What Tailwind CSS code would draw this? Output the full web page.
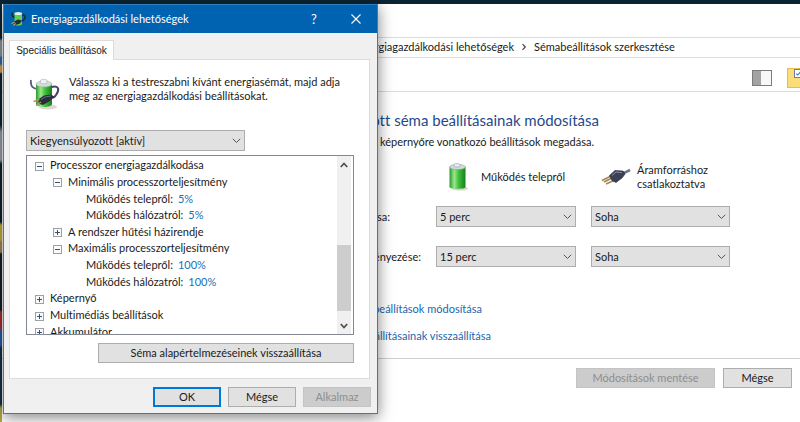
<!DOCTYPE html>
<html lang="hu">
<head>
<meta charset="utf-8">
<title>Energiagazdálkodási lehetőségek</title>
<script src="https://cdn.jsdelivr.net/npm/@tailwindcss/browser@4"></script>
</head>
<body class="relative h-screen overflow-hidden bg-[linear-gradient(to_bottom,#0b2433_0_38px,#8a9aa5_41px_55px,#2b6cb0_58px_64px,#e0a040_66px_72px,#0b2433_74px_125px,#9aa0a8_132px_160px,#0c2130_164px_222px,#c9b22e_225px_240px,#a88a50_242px_252px,#10202c_254px_310px,#b02a30_312px_326px,#1f5fae_333px_345px,#14304a_348px_404px,#b5a840_408px)] font-[Lato,'Open_Sans',sans-serif] text-[11px] leading-[14px] text-[#1a1a1a] [font-variant-ligatures:none]">

<!-- Control panel window -->
<main class="mt-[4px] ml-[2px] flex h-full flex-col bg-white">
  <nav class="mt-[33px] flex h-[21px] items-center border-y border-[#dcdcdc] pb-px" aria-label="Útvonal">
    <a href="#" class="w-[512px] text-right whitespace-nowrap">Energiagazdálkodási lehetőségek</a>
    <svg class="mx-[7px] h-[8px] w-[6px]" viewBox="0 0 6 8" fill="none" stroke="#444" stroke-width="1.2"><path d="M1.5 1.2 4.3 4 1.5 6.8"/></svg>
    <a href="#" class="whitespace-nowrap">Sémabeállítások szerkesztése</a>
  </nav>
  <div class="flex h-[34px] items-center justify-end gap-[15px] border-b border-[#dcdcdc] pt-[6px]">
    <button aria-label="Panel" class="flex h-[16px] w-[20px] border border-[#7c7c7c] bg-[#f8f8f8]"><span class="h-full w-[8px] bg-[#a3a3a3]"></span></button>
    <button aria-label="Kijelölés" class="relative h-[20px] w-[13px] overflow-hidden border border-r-0 border-[#e3bd55] bg-[#fbdc79]">
      <svg class="absolute top-0 left-[6px] h-[9px] w-[9px]" viewBox="0 0 9 9"><rect x=".5" y=".5" width="9" height="8" fill="#fff" stroke="#6d7f96"/><path d="M2.3 4.6 3.8 6 6.6 2.6" fill="none" stroke="#2a7bd0" stroke-width="1.1"/></svg>
    </button>
  </div>

  <h1 class="mt-[19px] w-[597px] text-right text-[15px] leading-[18px] whitespace-nowrap text-[#1f4a8c]">Kiegyensúlyozott séma beállításainak módosítása</h1>
  <p class="mt-[6px] w-[592px] text-right whitespace-nowrap">A képernyőre vonatkozó beállítások megadása.</p>

  <section class="mt-[13px] grid grid-cols-[419px_140px_139px] gap-x-[15px]">
    <span></span>
    <div class="flex h-[30px] items-center gap-[13px] pl-[12px]">
      <svg class="h-[30px] w-[20px]" viewBox="0 0 20 30">
        <defs><linearGradient id="cell"><stop offset="0" stop-color="#2a9a2e"/><stop offset=".3" stop-color="#9be88c"/><stop offset=".55" stop-color="#45c13f"/><stop offset="1" stop-color="#12801c"/></linearGradient></defs>
        <ellipse cx="12" cy="26.500" rx="8" ry="2" fill="#d8d3cf"/>
        <path d="M1.500 5v20c0 2.500 16 2.500 16 0V5z" fill="url(#cell)"/>
        <ellipse cx="9.500" cy="5" rx="8" ry="2.600" fill="#cfdcd6" stroke="#8aa594" stroke-width=".6"/>
        <path d="M6 4.300V2.600c0-1.300 6-1.300 6 0v1.700c0 1-6 1-6 0z" fill="#e9eef0" stroke="#8c9aa5" stroke-width=".6"/>
      </svg>
      <span class="whitespace-nowrap">Működés telepről</span>
    </div>
    <div class="flex h-[30px] items-center gap-[6px] pl-[10px]">
      <svg class="h-[20px] w-[30px] shrink-0" viewBox="0 0 30 20">
        <path d="M21 6c3 .5 5-1.500 8-3" fill="none" stroke="#70748a" stroke-width="2.600"/>
        <path d="M1 13.500 10 9M5 17l9-4M3 15l8-4" stroke="#a58355" stroke-width="1.500"/>
        <path d="M8.500 8.500 14 3.500l8 .5 2 3-3 4-6 4.500-4-2z" fill="#3c4153" stroke="#222633" stroke-width=".6"/>
        <path d="M11 8.500 15 5l6 .5" fill="none" stroke="#8b93a8"/>
      </svg>
      <span>Áramforráshoz csatlakoztatva</span>
    </div>

    <label for="display-battery" class="mt-[14px] flex h-[21px] w-[388px] items-center justify-end">A kijelző kikapcsolása:</label>
    <div class="relative mt-[14px]">
      <select id="display-battery" class="h-[21px] w-full appearance-none border border-[#adadad] bg-[#e1e1e1] px-[3px]"><option>5 perc</option></select>
      <svg class="pointer-events-none absolute top-[8px] right-[4px] h-[6px] w-[9px]" viewBox="0 0 9 6" fill="none" stroke="#555"><path d="m.8.800 3.700 3.700L8.200.800"/></svg>
    </div>
    <div class="relative mt-[14px]">
      <select aria-label="A kijelző kikapcsolása hálózatról" class="h-[21px] w-full appearance-none border border-[#adadad] bg-[#e1e1e1] px-[3px]"><option>Soha</option></select>
      <svg class="pointer-events-none absolute top-[8px] right-[4px] h-[6px] w-[9px]" viewBox="0 0 9 6" fill="none" stroke="#555"><path d="m.8.800 3.700 3.700L8.200.800"/></svg>
    </div>

    <label for="sleep-battery" class="mt-[19px] flex h-[21px] items-center justify-end">Az alvó állapot kezdeményezése:</label>
    <div class="relative mt-[19px]">
      <select id="sleep-battery" class="h-[21px] w-full appearance-none border border-[#adadad] bg-[#e1e1e1] px-[3px]"><option>15 perc</option></select>
      <svg class="pointer-events-none absolute top-[8px] right-[4px] h-[6px] w-[9px]" viewBox="0 0 9 6" fill="none" stroke="#555"><path d="m.8.800 3.700 3.700L8.200.800"/></svg>
    </div>
    <div class="relative mt-[19px]">
      <select aria-label="Az alvó állapot kezdeményezése hálózatról" class="h-[21px] w-full appearance-none border border-[#adadad] bg-[#e1e1e1] px-[3px]"><option>Soha</option></select>
      <svg class="pointer-events-none absolute top-[8px] right-[4px] h-[6px] w-[9px]" viewBox="0 0 9 6" fill="none" stroke="#555"><path d="m.8.800 3.700 3.700L8.200.800"/></svg>
    </div>
  </section>

  <a href="#" class="mt-[35px] w-[480px] text-right whitespace-nowrap text-[#1a66ad]">Speciális energiaellátási beállítások módosítása</a>
  <a href="#" class="mt-[13px] w-[489px] text-right whitespace-nowrap text-[#1a66ad]">A séma alapbeállításainak visszaállítása</a>

  <footer class="mt-[15px] flex justify-end gap-[8px] border-t border-[#cfcfcf] pt-[9px] pr-[8px]">
    <button disabled class="h-[20px] w-[139px] border border-[#c4c4c4] bg-[#cccccc] text-[#8e8e8e]">Módosítások mentése</button>
    <button class="h-[20px] w-[69px] border border-[#adadad] bg-[#e1e1e1]">Mégse</button>
  </footer>
</main>

<!-- Advanced settings dialog -->
<div role="dialog" aria-labelledby="dialog-title" class="absolute top-[4px] left-[3px] w-[375px] border border-[#2f7fbf] bg-[#f0f0f0] shadow-[0_3px_14px_rgba(0,0,0,0.5)]">
  <header class="flex h-[28px] items-center bg-[#0063b1] pr-[16px] pl-[6px] text-white">
    <svg class="h-[16px] w-[16px]" viewBox="0 0 30 32">
      <path d="M3 3c-1 7 2 9 6 10M24 8c6 0 6 5 3 9l-6 5" fill="none" stroke="#1d2433" stroke-width="3"/>
      <path d="M8 5v21c0 4 15 4 15 0V5z" fill="#5ccf50"/>
      <ellipse cx="15.500" cy="5" rx="7.500" ry="3" fill="#e4efe6"/>
      <path d="M5 22l10-5 8 2-4 6-9 3z" fill="#252a35"/><path d="m2 25 7-3M5 29l6-4" stroke="#c7a877" stroke-width="2"/>
    </svg>
    <h2 id="dialog-title" class="ml-[5px] flex-1">Energiagazdálkodási lehetőségek</h2>
    <button aria-label="Súgó" class="w-[10px] text-[13px]">?</button>
    <button aria-label="Bezárás" class="ml-[32px]"><svg class="h-[10px] w-[10px]" viewBox="0 0 10 10" stroke="#fff" stroke-width="1.100"><path d="m.5.500 9 9m0-9-9 9"/></svg></button>
  </header>

  <div class="px-[5px] pt-[7px] pb-[6px]">
    <div role="tablist" class="flex"><button role="tab" aria-selected="true" class="relative z-10 -mb-px h-[20px] w-[105px] border border-b-0 border-[#dcdcdc] bg-white font-['Liberation_Sans',sans-serif] text-[10px] whitespace-nowrap">Speciális beállítások</button></div>
    <div class="mr-[2px] border border-[#dcdcdc] bg-white pr-[15px] pb-[15px] pl-[16px]">
      <div class="flex gap-[9px] pt-[15px] pl-[4px]">
        <svg class="mt-[3px] h-[32px] w-[30px] shrink-0" viewBox="0 0 30 32">
          <ellipse cx="18" cy="29" rx="9" ry="2.500" fill="#ddd8d3"/>
          <path d="M1 2c-1 7 3 9 7 9" fill="none" stroke="#5b5a78" stroke-width="1.800"/>
          <path d="M6 6v20c0 4 16 4 16 0V6z" fill="url(#cell)"/>
          <ellipse cx="14" cy="6" rx="8" ry="3" fill="#d3ddd6" stroke="#9cb0a3" stroke-width=".6"/>
          <path d="M10.500 5V2.500c0-1.500 6.500-1.500 6.500 0V5c0 1-6.500 1-6.500 0z" fill="#eef1f3" stroke="#a4adb5" stroke-width=".6"/>
          <path d="M22 9c8-2 7 4 4 8-1 2-3 3-6 3" fill="none" stroke="#45445f" stroke-width="2"/>
          <path d="M8 21.500 14 17.500l7-1 3 2-4 4.500-7 4-4-1z" fill="#2b2e3a"/>
          <path d="M11 21.500 15 19l6-1" fill="none" stroke="#777d90" stroke-width=".8"/>
          <path d="m3.500 23.500 6-2M6 27.500l5-3.500" stroke="#b3925f" stroke-width="1.400"/>
        </svg>
        <p class="whitespace-nowrap">Válassza ki a testreszabni kívánt energiasémát, majd adja<br>meg az energiagazdálkodási beállításokat.</p>
      </div>

      <div class="relative mt-[20px] w-[219px]">
        <select aria-label="Energiaséma" class="block h-[21px] w-full appearance-none border border-[#adadad] bg-[#e1e1e1] px-[3px]"><option>Kiegyensúlyozott [aktív]</option></select>
        <svg class="pointer-events-none absolute top-[8px] right-[4px] h-[6px] w-[9px]" viewBox="0 0 9 6" fill="none" stroke="#555"><path d="m.8.800 3.700 3.700L8.200.800"/></svg>
      </div>

      <div class="mt-[4px] flex h-[180px] overflow-hidden border border-[#828790]">
        <svg class="hidden"><defs>
          <symbol id="minus" viewBox="0 0 9 9"><rect x=".5" y=".5" width="8" height="8" fill="#fafafa" stroke="#a0a0a0"/><path d="M2 4.500h5" stroke="#33507e"/></symbol>
          <symbol id="plus" viewBox="0 0 9 9"><rect x=".5" y=".5" width="8" height="8" fill="#fafafa" stroke="#a0a0a0"/><path d="M2 4.500h5M4.500 2v5" stroke="#33507e"/></symbol>
        </defs></svg>
        <ul role="tree" class="grid h-[184px] flex-1 auto-rows-fr content-start items-center pt-px pl-[8px] whitespace-nowrap">
          <li class="flex items-center gap-[6px]"><svg class="mt-[2px] h-[9px] w-[9px]"><use href="#minus"/></svg>Processzor energiagazdálkodása</li>
          <li class="flex items-center gap-[6px] pl-[18px]"><svg class="mt-[2px] h-[9px] w-[9px]"><use href="#minus"/></svg>Minimális processzorteljesítmény</li>
          <li class="flex gap-[5px] pl-[51px]">Működés telepről: <a href="#" class="text-[#1a6fb5]">5%</a></li>
          <li class="flex gap-[5px] pl-[51px]">Működés hálózatról: <a href="#" class="text-[#1a6fb5]">5%</a></li>
          <li class="flex items-center gap-[6px] pl-[18px]"><svg class="mt-[2px] h-[9px] w-[9px]"><use href="#plus"/></svg>A rendszer hűtési házirendje</li>
          <li class="flex items-center gap-[6px] pl-[18px]"><svg class="mt-[2px] h-[9px] w-[9px]"><use href="#minus"/></svg>Maximális processzorteljesítmény</li>
          <li class="flex gap-[5px] pl-[51px]">Működés telepről: <a href="#" class="text-[#1a6fb5]">100%</a></li>
          <li class="flex gap-[5px] pl-[51px]">Működés hálózatról: <a href="#" class="text-[#1a6fb5]">100%</a></li>
          <li class="flex items-center gap-[6px]"><svg class="mt-[2px] h-[9px] w-[9px]"><use href="#plus"/></svg>Képernyő</li>
          <li class="flex items-center gap-[6px]"><svg class="mt-[2px] h-[9px] w-[9px]"><use href="#plus"/></svg>Multimédiás beállítások</li>
          <li class="flex items-center gap-[6px]"><svg class="mt-[2px] h-[9px] w-[9px]"><use href="#plus"/></svg>Akkumulátor</li>
        </ul>
        <div class="mr-[2px] flex w-[14px] flex-col items-center bg-[#f0f0f0] pt-[6px] pb-[5px]">
          <svg class="h-[6px] w-[8px]" viewBox="0 0 8 6" fill="none" stroke="#505050" stroke-width="1.800"><path d="M.8 5 4 1.500 7.200 5"/></svg>
          <div class="mt-[77px] h-[66px] w-full bg-[#cdcdcd]"></div>
          <svg class="mt-auto h-[6px] w-[8px]" viewBox="0 0 8 6" fill="none" stroke="#505050" stroke-width="1.800"><path d="M.8 1 4 4.500 7.200 1"/></svg>
        </div>
      </div>
      <div class="mt-[8px] flex justify-end"><button class="h-[20px] w-[256px] border border-[#adadad] bg-[#e1e1e1]">Séma alapértelmezéseinek visszaállítása</button></div>
    </div>

    <div class="mt-[8px] mr-px flex justify-end gap-[7px]">
      <button class="h-[20px] w-[68px] border-2 border-[#0078d7] bg-[#e1e1e1]">OK</button>
      <button class="h-[20px] w-[68px] border border-[#adadad] bg-[#e1e1e1]">Mégse</button>
      <button disabled class="h-[20px] w-[68px] border border-[#c4c4c4] bg-[#cccccc] text-[#8e8e8e]">Alkalmaz</button>
    </div>
  </div>
</div>
</body>
</html>
